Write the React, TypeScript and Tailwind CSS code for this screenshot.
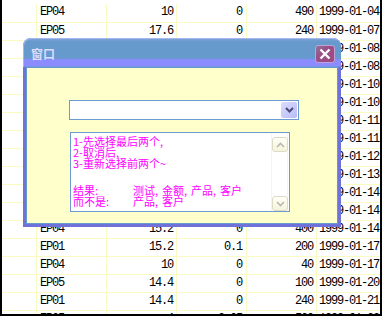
import React from 'react';

const rows: string[][] = [
  ['EP04', '10', '0', '490', '1999-01-04'],
  ['EP05', '17.6', '0', '240', '1999-01-07'],
  ['EP01', '15.2', '0', '300', '1999-01-08'],
  ['EP04', '10', '0', '120', '1999-01-08'],
  ['EP05', '17.6', '0', '200', '1999-01-10'],
  ['EP01', '15.2', '0', '100', '1999-01-10'],
  ['EP04', '10', '0', '360', '1999-01-11'],
  ['EP05', '17.6', '0', '80', '1999-01-11'],
  ['EP01', '15.2', '0', '240', '1999-01-12'],
  ['EP04', '10', '0', '160', '1999-01-13'],
  ['EP05', '14.4', '0', '300', '1999-01-14'],
  ['EP01', '15.2', '0', '120', '1999-01-14'],
  ['EP04', '15.2', '0', '400', '1999-01-14'],
  ['EP01', '15.2', '0.1', '200', '1999-01-17'],
  ['EP04', '10', '0', '40', '1999-01-17'],
  ['EP05', '14.4', '0', '100', '1999-01-20'],
  ['EP01', '14.4', '0', '240', '1999-01-21'],
  ['EP05', '4', '0.05', '500', '1999-01-22'],
];

const Chevron = ({ up, color, width }: { up?: boolean; color: string; width: number }) => (
  <svg width="9" height="6" viewBox="0 0 9 6">
    <path
      d={up ? 'M1 5 L4.5 1.5 L8 5' : 'M1 1 L4.5 4.5 L8 1'}
      fill="none"
      stroke={color}
      strokeWidth={width}
    />
  </svg>
);

const ScrollButton = ({ up }: { up?: boolean }) => (
  <div className="w-[16px] h-[15px] rounded-[3px] border border-[#dcdcc4] bg-gradient-to-b from-[#fffff8] to-[#f4f4dc] flex items-center justify-center">
    <Chevron up={up} color="#b8b8b0" width={1.6} />
  </div>
);

// words separated by a wide half-width comma, like the old bitmap font
const List = ({ items }: { items: string[] }) => (
  <span className="flex">
    {items.map((w, i) => (
      <span key={i} className="flex">
        {w}
        {i < items.length - 1 && <span className="inline-block w-[7px]">,</span>}
      </span>
    ))}
  </span>
);

export default function App() {
  return (
    <div className="relative w-[382px] h-[317px] bg-white overflow-hidden font-[family-name:'Liberation_Mono',monospace] text-[12px] tracking-[-1.2px] text-black">
      <div className="w-[382px] h-[316px] border-l-2 border-r-2 border-b-2 border-black overflow-hidden">
        {rows.map((r, i) => (
          <div
            key={i}
            className={`grid grid-cols-[35px_70px_70px_70px_70px_1fr] border-b border-[#fafac4] ${
              i === 0 ? 'h-[23px] pt-[4px]' : 'h-[18px]'
            }`}
          >
            <div className="border-r border-[#fafac4]" />
            <div className="border-r border-[#fafac4] pl-[3px] leading-[17px] whitespace-nowrap">{r[0]}</div>
            <div className="border-r border-[#fafac4] pr-[3px] text-right leading-[17px]">{r[1]}</div>
            <div className="border-r border-[#fafac4] pr-[4px] text-right leading-[17px]">{r[2]}</div>
            <div className="border-r border-[#fafac4] pr-[3px] text-right leading-[17px]">{r[3]}</div>
            <div className="pl-[2px] leading-[17px] whitespace-nowrap overflow-hidden">{r[4]}</div>
          </div>
        ))}
      </div>

      {/* dialog window */}
      <div className="absolute left-[23px] top-[38px] w-[318px] h-[189px] rounded-t-[8px] bg-[#6f72d8] flex flex-col tracking-normal font-[family-name:'Noto_Sans_CJK_SC',sans-serif]">
        <div className="relative h-[29px] rounded-t-[8px] border-t border-l border-[#a6b6ee] bg-[linear-gradient(to_bottom,#7aa2d6_0px,#6699cc_3px,#6699cc_19px,#8a8cff_21px,#8a8cff_27px,#6699cc_28px)] flex items-start pl-[7px] pt-[8px]">
          <span className="text-[12px] leading-[13px] font-bold text-[#dcdcff]">窗口</span>
          <div className="absolute left-[291px] top-[6px] w-[20px] h-[18px] rounded-[3px] border border-[#c4a0d4] bg-[linear-gradient(135deg,#8a7a94_0%,#9a5088_35%,#9a4a80_100%)] flex items-center justify-center">
            <svg width="12" height="12" viewBox="0 0 12 12">
              <path d="M1.5 1.5 L10.5 10.5 M10.5 1.5 L1.5 10.5" stroke="#ffffff" strokeWidth="2.4" />
            </svg>
          </div>
        </div>
        <div className="flex-1 mx-[3px] mb-[3px] border border-[#6699cc] bg-[#ffffcc] flex flex-col">
          <div className="mt-[32px] ml-[42px] w-[230px] h-[20px] border border-[#6b9bd1] bg-white flex justify-end items-center pr-[1px]">
            <div className="w-[16px] h-[16px] rounded-[2px] bg-gradient-to-br from-[#dcdcff] to-[#b8bcf4] flex items-center justify-center">
              <Chevron color="#4a4a7a" width={2} />
            </div>
          </div>
          <div className="mt-[12px] ml-[43px] w-[220px] h-[80px] border border-[#6b9bd1] bg-white flex">
            <div className="flex-1 pl-[2px] pt-[3px] text-[11px] leading-[11px] text-[#ff00ff] whitespace-pre">
              <div className="h-[11px]">1-先选择最后两个,</div>
              <div className="h-[11px]">2-取消后,</div>
              <div className="h-[11px]">3-重新选择前两个~</div>
              <div className="h-[16px]" />
              <div className="flex h-[11px]">
                <span className="w-[60px]">结果:</span>
                <List items={['测试', '金额', '产品', '客户']} />
              </div>
              <div className="flex h-[11px]">
                <span className="w-[60px]">而不是:</span>
                <List items={['产品', '客户']} />
              </div>
            </div>
            <div className="w-[17px] mr-[1px] flex flex-col justify-between pt-[4px] border-l border-r border-[#f6f6e4]">
              <ScrollButton up />
              <ScrollButton />
            </div>
          </div>
        </div>
      </div>
    </div>
  );
}
